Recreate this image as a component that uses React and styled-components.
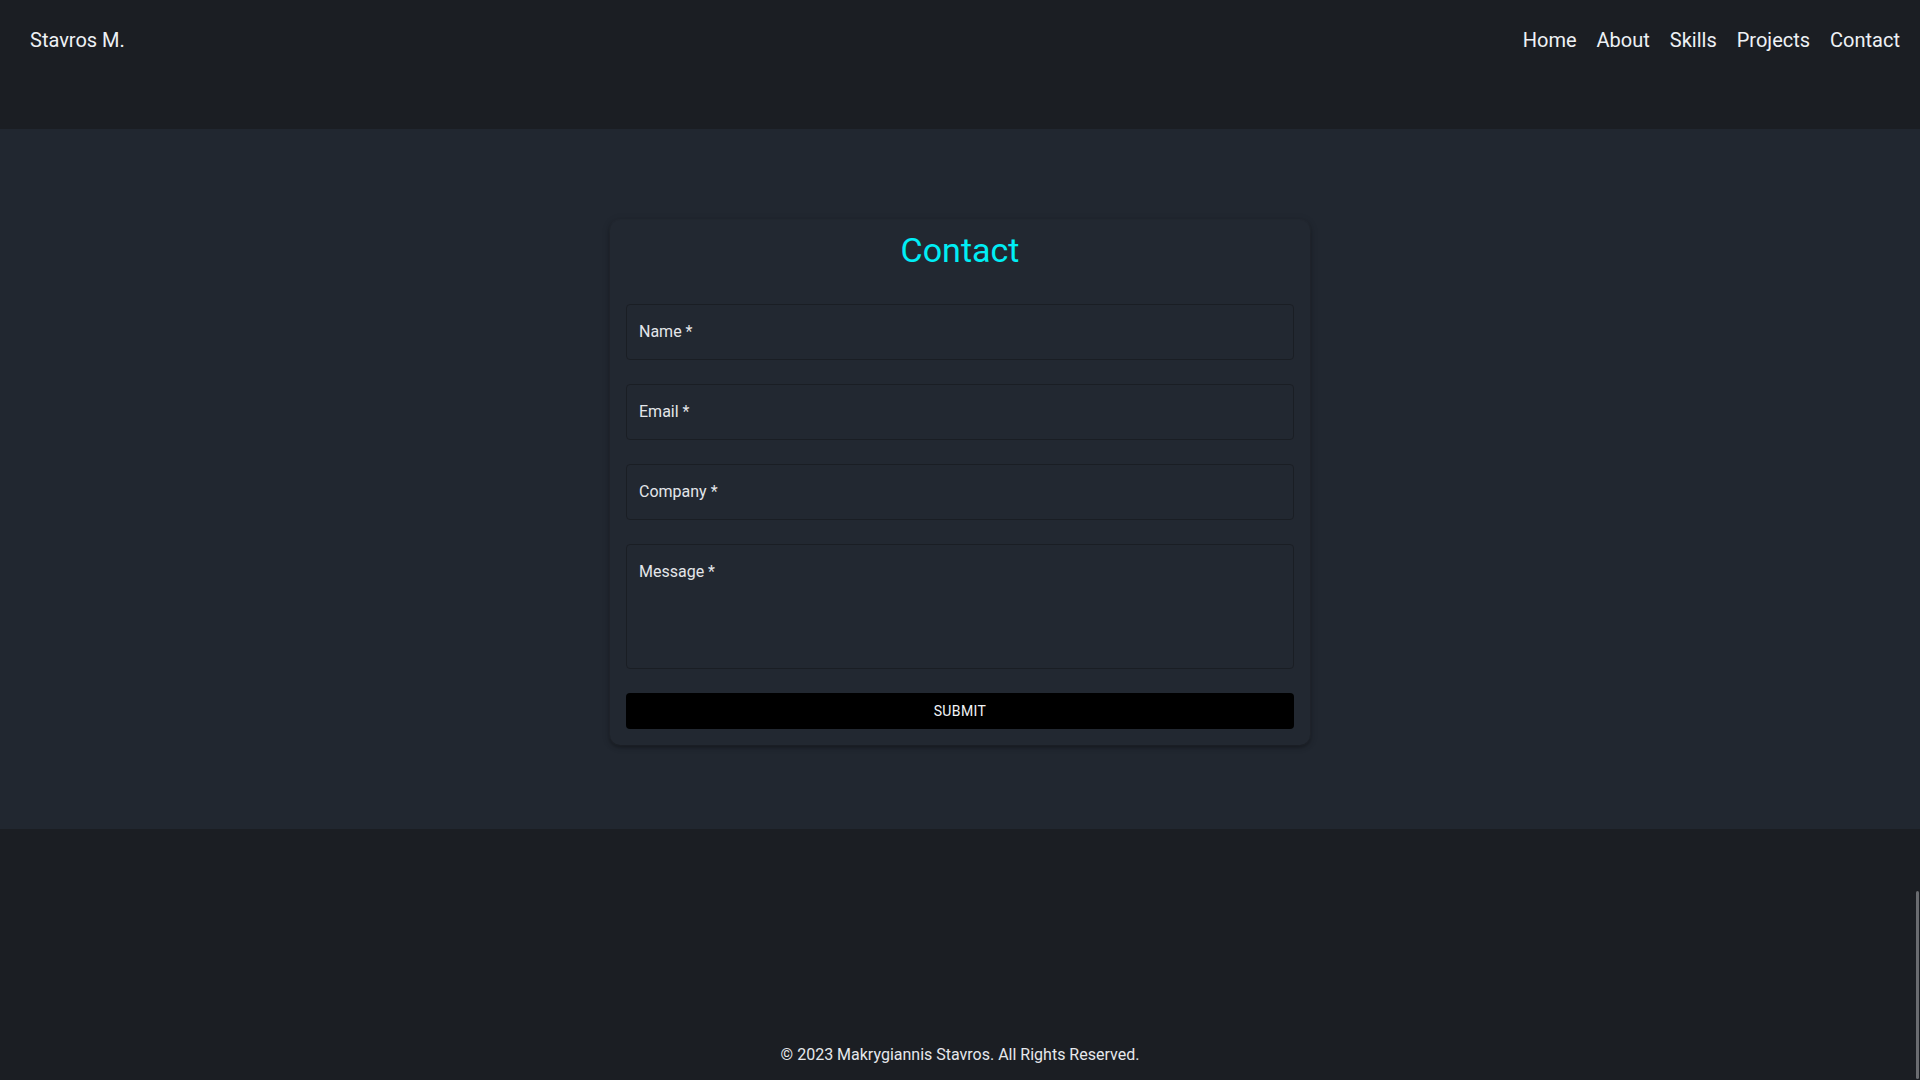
import React from "react";
import styled, { createGlobalStyle } from "styled-components";

const GlobalStyle = createGlobalStyle`
  html, body {
    margin: 0;
    padding: 0;
    background: #1b1e23;
    font-family: Roboto, "Liberation Sans", Arial, sans-serif;
    overflow: hidden;
  }
  * { box-sizing: border-box; }
`;

const Page = styled.div`
  display: flex;
  flex-direction: column;
  min-height: 1080px;
`;

const Header = styled.header`
  height: 129px;
  background: #1b1e23;
  display: flex;
  justify-content: space-between;
  align-items: flex-start;
  padding: 28px 20px 0 30px;
`;

const Logo = styled.a`
  font-size: 20px;
  color: #eef1f5;
  text-decoration: none;
  line-height: normal;
`;

const Nav = styled.nav`
  display: flex;
  gap: 20px;
`;

const NavLink = styled.a`
  font-size: 20px;
  color: #eef1f5;
  text-decoration: none;
  line-height: normal;
`;

const Section = styled.section`
  height: 700px;
  background: #212730;
  display: flex;
  justify-content: center;
  padding-top: 91px;
`;

const Card = styled.form`
  width: 700px;
  height: 525px;
  padding: 9px 16px 16px;
  border-radius: 10px;
  background: #222831;
  box-shadow: 0 0 0 1px rgba(255, 255, 255, 0.02), 0 2px 4px rgba(0, 0, 0, 0.35),
    0 1px 10px rgba(0, 0, 0, 0.12);
  display: flex;
  flex-direction: column;
`;

const Title = styled.h2`
  margin: 0 0 33px;
  text-align: center;
  font-size: 34px;
  font-weight: 400;
  line-height: 42px;
  color: #00eef5;
`;

const Fields = styled.div`
  display: flex;
  flex-direction: column;
  gap: 24px;
`;

const Field = styled.div`
  position: relative;
  height: ${(p) => (p.$tall ? "125px" : "56px")};
`;

const FieldLabel = styled.label`
  position: absolute;
  left: 13px;
  top: 16px;
  font-size: 16px;
  line-height: 23px;
  color: #e4e6ea;
  pointer-events: none;
`;

const Input = styled.input`
  width: 100%;
  height: 100%;
  background: transparent;
  border: 1px solid #1a1e24;
  border-radius: 4px;
  padding: 16.5px 14px;
  color: #e4e6ea;
  font: inherit;
  font-size: 16px;
  outline: none;
`;

const TextArea = styled.textarea`
  width: 100%;
  height: 100%;
  background: transparent;
  border: 1px solid #1a1e24;
  border-radius: 4px;
  padding: 16.5px 14px;
  color: #e4e6ea;
  font: inherit;
  font-size: 16px;
  outline: none;
  resize: none;
`;

const SubmitButton = styled.button`
  margin-top: 24px;
  height: 36px;
  width: 100%;
  border: none;
  border-radius: 4px;
  background: #000;
  color: #f2f4f7;
  font-family: Roboto, "Liberation Sans", Arial, sans-serif;
  font-size: 14px;
  font-weight: 400;
  letter-spacing: 0.4px;
  text-transform: uppercase;
  cursor: pointer;
`;

const Footer = styled.footer`
  height: 251px;
  background: #1b1e23;
  display: flex;
  align-items: flex-end;
  justify-content: center;
  padding-bottom: 16px;
`;

const Copyright = styled.p`
  margin: 0;
  font-size: 16px;
  line-height: 19px;
  color: #e6e8ec;
`;

const ScrollThumb = styled.div`
  position: fixed;
  right: 1px;
  top: 891px;
  bottom: 1px;
  width: 3px;
  border-radius: 2px;
  background: #6a6c70;
`;

const fields = [
  { id: "name", label: "Name *" },
  { id: "email", label: "Email *" },
  { id: "company", label: "Company *" },
];

export default function App() {
  return (
    <>
      <GlobalStyle />
      <Page>
        <Header>
          <Logo href="#">Stavros M.</Logo>
          <Nav>
            {["Home", "About", "Skills", "Projects", "Contact"].map((n) => (
              <NavLink key={n} href="#">
                {n}
              </NavLink>
            ))}
          </Nav>
        </Header>
        <Section>
          <Card onSubmit={(e) => e.preventDefault()}>
            <Title>Contact</Title>
            <Fields>
              {fields.map((f) => (
                <Field key={f.id}>
                  <FieldLabel htmlFor={f.id}>{f.label}</FieldLabel>
                  <Input id={f.id} />
                </Field>
              ))}
              <Field $tall>
                <FieldLabel htmlFor="message">Message *</FieldLabel>
                <TextArea id="message" />
              </Field>
            </Fields>
            <SubmitButton type="submit">Submit</SubmitButton>
          </Card>
        </Section>
        <Footer>
          <Copyright>© 2023 Makrygiannis Stavros. All Rights Reserved.</Copyright>
        </Footer>
      </Page>
      <ScrollThumb />
    </>
  );
}
